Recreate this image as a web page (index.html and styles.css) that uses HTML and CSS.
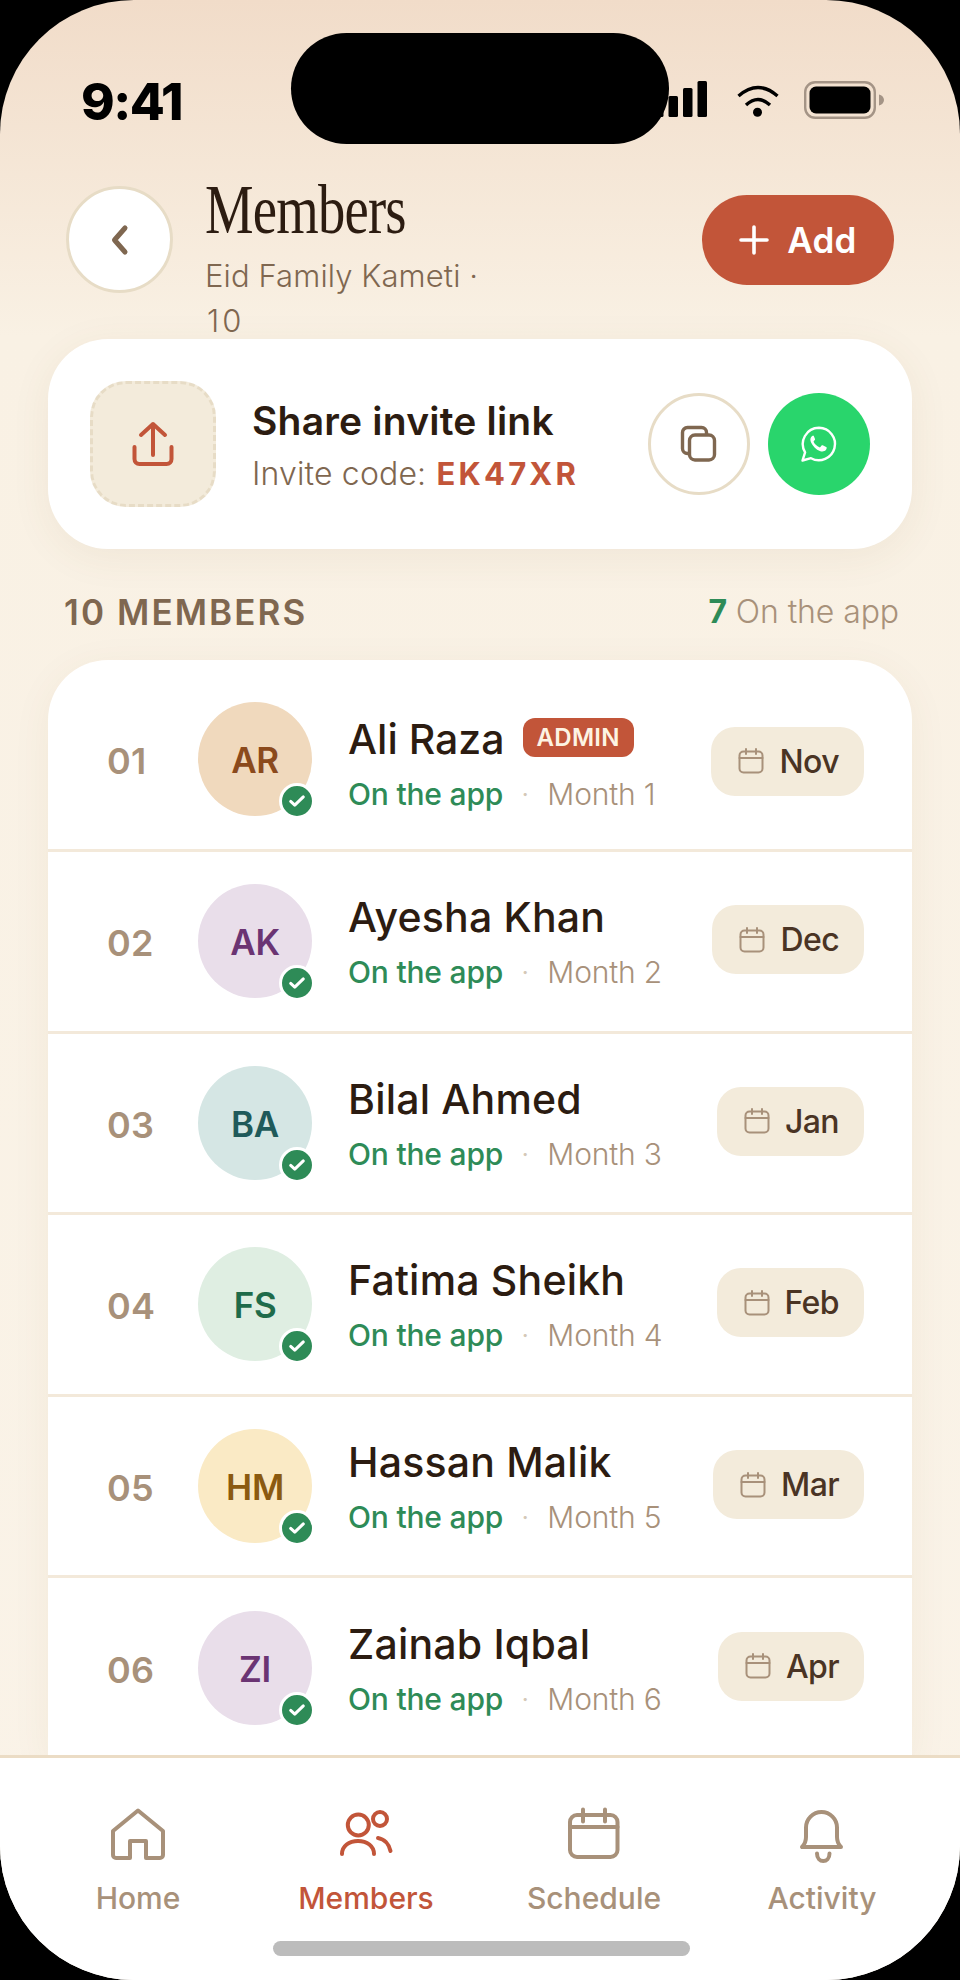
FILE: index.html
```html
<!DOCTYPE html>
<html lang="en">
<head>
<meta charset="utf-8">
<title>Members</title>
<link rel="stylesheet" href="styles.css">
</head>
<body>
<div class="phone">
  <div class="island"></div>
  <header class="status">
    <span class="time">9:41</span>
    <div class="status-icons">
      <svg class="signal" width="53" height="36" viewBox="0 0 53 36"><rect x="0" y="23" width="9.500" height="13" rx="1.500"/><rect x="14.500" y="15" width="9.500" height="21" rx="1.500"/><rect x="29" y="7" width="9.500" height="29" rx="1.500"/><rect x="43.500" y="0" width="9.500" height="36" rx="1.500"/></svg>
      <svg class="wifi" width="42" height="32" viewBox="0 0 42 32" fill="none" stroke="#000" stroke-width="3.400"><path d="M1.500 11Q21-6 40.500 11"/><path d="M9 20Q21 9 33 20"/><circle cx="20.500" cy="27.300" r="4.500" fill="#000" stroke="none"/></svg>
      <svg class="battery" width="80" height="38" viewBox="0 0 80 38"><rect x="1.200" y="1.200" width="69.600" height="35.600" rx="10" fill="none" stroke="#a49486" stroke-width="2.400"/><rect x="5.500" y="5.500" width="61" height="27" rx="6.500" fill="#000"/><path d="M75 13.500c3 .5 5 3 5 5.500s-2 5-5 5.500z" fill="#a49486"/></svg>
    </div>
  </header>

  <section class="topbar">
    <button class="back" aria-label="Back"><svg width="26" height="34" viewBox="0 0 26 34" fill="none" stroke="#7f6750" stroke-width="5" stroke-linecap="round" stroke-linejoin="round"><path d="M18 5 7.500 17 18 29"/></svg></button>
    <div class="heading">
      <h1>Members</h1>
      <p>Eid Family Kameti ·<br><span class="total">10</span></p>
    </div>
    <button class="add"><svg width="30" height="30" viewBox="0 0 30 30" stroke="#fff" stroke-width="3.600" stroke-linecap="round"><path d="M15 2v26M2 15h26"/></svg><span>Add</span></button>
  </section>

  <section class="invite">
    <div class="invite-icon"><svg width="44" height="48" viewBox="0 0 44 48" fill="none" stroke="#c25539" stroke-width="4" stroke-linecap="round" stroke-linejoin="round"><path d="M22 35V4M10 15 22 4l12 11M3.500 27v12c0 3 2 5 5 5h27c3 0 5-2 5-5V27"/></svg></div>
    <div class="invite-text">
      <div class="invite-title">Share invite link</div>
      <div class="invite-code">Invite code: <b>EK47XR</b></div>
    </div>
    <button class="round copy" aria-label="Copy"><svg width="36" height="36" viewBox="0 0 36 36" fill="none" stroke="#7f6750" stroke-width="3.400"><rect x="8.500" y="9" width="25" height="25" rx="5.500"/><path d="M8 27.500H6.500a5 5 0 0 1-5-5V6.500a5 5 0 0 1 5-5h14a5 5 0 0 1 5 5V9"/></svg></button>
    <button class="round wa" aria-label="WhatsApp"><svg width="36" height="36" viewBox="0 0 36 36"><path d="M18 1.800A16.200 16.200 0 0 0 4.100 26.300L1.500 34.500l8.500-2.300A16.200 16.200 0 1 0 18 1.800Z" fill="none" stroke="#fff" stroke-width="2.400" stroke-linejoin="round"/><path d="M12.600 9.500c-.6 0-1.600.4-2.200 1.200-1.300 1.600-1.300 3.700-.2 6 1.700 3.500 5 6.900 8.600 8.300 2.300.9 4.600.7 6-.9.600-.7.900-1.500.9-2.300 0-.5-.2-.7-.6-.9l-3.400-1.600c-.5-.2-.8-.1-1.100.3l-1.200 1.500c-.3.300-.6.400-1 .2-2.500-1-4.500-2.900-5.700-5.200-.2-.4-.1-.7.200-1l.9-1.100c.3-.4.300-.7.200-1.100l-1.300-3.200c-.2-.4-.4-.6-.8-.6z" fill="#fff"/></svg></button>
  </section>

  <div class="section-head">
    <span class="count">10 MEMBERS</span>
    <span class="onapp"><b>7</b> On the app</span>
  </div>

  <section class="list">
    <div class="row">
      <span class="num">01</span>
      <div class="avatar av-tan">AR<span class="check"><svg width="20" height="20" viewBox="0 0 20 20" fill="none" stroke="#fff" stroke-width="3.400" stroke-linecap="round" stroke-linejoin="round"><path d="m3 10.500 4.500 4L17 5.500"/></svg></span></div>
      <div class="info"><div class="name">Ali Raza<span class="badge">ADMIN</span></div><div class="sub"><span class="on">On the app</span><i>·</i><span>Month 1</span></div></div>
      <div class="pill"><svg width="26" height="26" viewBox="0 0 26 26" fill="none" stroke="#a8917a" stroke-width="2"><rect x="1.500" y="3.500" width="23" height="21" rx="4"/><path d="M1.500 10h23M8 1v5M18 1v5" stroke-linecap="round"/></svg>Nov</div>
    </div>
    <div class="row">
      <span class="num">02</span>
      <div class="avatar av-plum">AK<span class="check"><svg width="20" height="20" viewBox="0 0 20 20" fill="none" stroke="#fff" stroke-width="3.400" stroke-linecap="round" stroke-linejoin="round"><path d="m3 10.500 4.500 4L17 5.500"/></svg></span></div>
      <div class="info"><div class="name">Ayesha Khan</div><div class="sub"><span class="on">On the app</span><i>·</i><span>Month 2</span></div></div>
      <div class="pill"><svg width="26" height="26" viewBox="0 0 26 26" fill="none" stroke="#a8917a" stroke-width="2"><rect x="1.500" y="3.500" width="23" height="21" rx="4"/><path d="M1.500 10h23M8 1v5M18 1v5" stroke-linecap="round"/></svg>Dec</div>
    </div>
    <div class="row">
      <span class="num">03</span>
      <div class="avatar av-teal">BA<span class="check"><svg width="20" height="20" viewBox="0 0 20 20" fill="none" stroke="#fff" stroke-width="3.400" stroke-linecap="round" stroke-linejoin="round"><path d="m3 10.500 4.500 4L17 5.500"/></svg></span></div>
      <div class="info"><div class="name">Bilal Ahmed</div><div class="sub"><span class="on">On the app</span><i>·</i><span>Month 3</span></div></div>
      <div class="pill"><svg width="26" height="26" viewBox="0 0 26 26" fill="none" stroke="#a8917a" stroke-width="2"><rect x="1.500" y="3.500" width="23" height="21" rx="4"/><path d="M1.500 10h23M8 1v5M18 1v5" stroke-linecap="round"/></svg>Jan</div>
    </div>
    <div class="row">
      <span class="num">04</span>
      <div class="avatar av-mint">FS<span class="check"><svg width="20" height="20" viewBox="0 0 20 20" fill="none" stroke="#fff" stroke-width="3.400" stroke-linecap="round" stroke-linejoin="round"><path d="m3 10.500 4.500 4L17 5.500"/></svg></span></div>
      <div class="info"><div class="name">Fatima Sheikh</div><div class="sub"><span class="on">On the app</span><i>·</i><span>Month 4</span></div></div>
      <div class="pill"><svg width="26" height="26" viewBox="0 0 26 26" fill="none" stroke="#a8917a" stroke-width="2"><rect x="1.500" y="3.500" width="23" height="21" rx="4"/><path d="M1.500 10h23M8 1v5M18 1v5" stroke-linecap="round"/></svg>Feb</div>
    </div>
    <div class="row">
      <span class="num">05</span>
      <div class="avatar av-gold">HM<span class="check"><svg width="20" height="20" viewBox="0 0 20 20" fill="none" stroke="#fff" stroke-width="3.400" stroke-linecap="round" stroke-linejoin="round"><path d="m3 10.500 4.500 4L17 5.500"/></svg></span></div>
      <div class="info"><div class="name">Hassan Malik</div><div class="sub"><span class="on">On the app</span><i>·</i><span>Month 5</span></div></div>
      <div class="pill"><svg width="26" height="26" viewBox="0 0 26 26" fill="none" stroke="#a8917a" stroke-width="2"><rect x="1.500" y="3.500" width="23" height="21" rx="4"/><path d="M1.500 10h23M8 1v5M18 1v5" stroke-linecap="round"/></svg>Mar</div>
    </div>
    <div class="row">
      <span class="num">06</span>
      <div class="avatar av-plum">ZI<span class="check"><svg width="20" height="20" viewBox="0 0 20 20" fill="none" stroke="#fff" stroke-width="3.400" stroke-linecap="round" stroke-linejoin="round"><path d="m3 10.500 4.500 4L17 5.500"/></svg></span></div>
      <div class="info"><div class="name">Zainab Iqbal</div><div class="sub"><span class="on">On the app</span><i>·</i><span>Month 6</span></div></div>
      <div class="pill"><svg width="26" height="26" viewBox="0 0 26 26" fill="none" stroke="#a8917a" stroke-width="2"><rect x="1.500" y="3.500" width="23" height="21" rx="4"/><path d="M1.500 10h23M8 1v5M18 1v5" stroke-linecap="round"/></svg>Apr</div>
    </div>
  </section>

  <nav class="tabbar">
    <div class="tab"><svg width="58" height="54" viewBox="0 0 58 54" fill="none" stroke="#a8917a" stroke-width="4" stroke-linejoin="round"><path d="M29 4.500 4 25v24a3 3 0 0 0 3 3h14V35h16v17h14a3 3 0 0 0 3-3V25z"/></svg><span>Home</span></div>
    <div class="tab active"><svg width="58" height="54" viewBox="0 0 58 54" fill="none" stroke="#c25539" stroke-width="4" stroke-linecap="round"><circle cx="21.300" cy="19" r="10.500"/><circle cx="43" cy="13" r="7"/><path d="M5 48c0-8 7-13 16-13s16 5 16 13M41 32c6 1 11 6 12.500 13"/></svg><span>Members</span></div>
    <div class="tab"><svg width="58" height="54" viewBox="0 0 58 54" fill="none" stroke="#a8917a" stroke-width="4" stroke-linecap="round"><rect x="5" y="9" width="47.500" height="42" rx="7"/><path d="M5 21h47.500M18 3.500v12M40 3.500v12"/></svg><span>Schedule</span></div>
    <div class="tab"><svg width="58" height="54" viewBox="0 0 58 54" fill="none" stroke="#a8917a" stroke-width="4" stroke-linecap="round" stroke-linejoin="round"><path d="M9 41h39c-3-3-4-6-4-10v-9.500a15.500 15.500 0 0 0-31 0V31c0 4-1 7-4 10zM24 47.500c0 10 12.500 10 12.500 0"/></svg><span>Activity</span></div>
  </nav>
  <div class="home-indicator"></div>
</div>
</body>
</html>
```

FILE: styles.css
```css
* { box-sizing: border-box; }
html, body { margin: 0; padding: 0; background: #000; }
body { width: 960px; height: 1980px; overflow: hidden; font-family: Inter, "Noto Sans", sans-serif; }
button { padding: 0; font: inherit; cursor: pointer; }
b { font-weight: inherit; }
svg { overflow: visible; flex: none; }

.phone {
  position: relative;
  width: 960px;
  height: 1980px;
  border-radius: 134px;
  overflow: hidden;
  display: flex;
  flex-direction: column;
  background: linear-gradient(180deg, #f1dcc9 0, #f9f1e4 336px, #faf3e8 100%);
}
.island {
  position: absolute;
  left: 291px;
  top: 33px;
  width: 378px;
  height: 111px;
  border-radius: 56px;
  background: #000;
  z-index: 5;
}

.status { height: 186px; flex: none; display: flex; justify-content: space-between; padding: 78px 76px 0 81px; }
.time { font-size: 51px; font-weight: 800; line-height: 48px; color: #000; letter-spacing: -1.500px; }
.status-icons { display: flex; align-items: flex-start; }
.signal { margin: 3px 0 0; }
.wifi { margin: 7px 0 0 30px; }
.battery { margin: 3px 0 0 25px; }

.topbar { display: flex; height: 153px; flex: none; padding: 0 66px; position: relative; }
.back {
  width: 107px; height: 107px; border-radius: 50%;
  background: #fff; border: 3px solid #e7dcc6;
  display: flex; align-items: center; justify-content: center; flex: none;
}
.heading { margin-left: 32px; width: 300px; }
.heading h1 {
  margin: -13px 0 0; font-family: "Liberation Serif", serif; font-weight: 400;
  font-size: 70px; line-height: 74px; color: #2c1c11; letter-spacing: -1px;
  transform: scaleX(.78); transform-origin: left center; white-space: nowrap;
}
.heading p { margin: 6px 0 0; font-size: 31px; line-height: 45px; color: #7f6750; font-weight: 300; letter-spacing: .1px; }
.total { letter-spacing: 3px; margin-left: 2px; }
.add {
  position: absolute; right: 66px; top: 9px; width: 192px; height: 90px; border: 0; border-radius: 45px;
  background: #c25539; color: #fff; font-size: 35px; font-weight: 600; letter-spacing: .3px;
  display: flex; align-items: center; justify-content: center; gap: 18px;
}

.invite {
  margin: 0 48px; height: 210px; flex: none; border-radius: 60px; background: #fff;
  padding: 0 42px; display: flex; align-items: center;
  box-shadow: 0 8px 40px rgba(120, 80, 40, .07);
}
.invite-icon {
  width: 126px; height: 126px; flex: none; border-radius: 36px; background: #f3ebdb;
  border: 3px dashed #e7dcc6; display: flex; align-items: center; justify-content: center;
}
.invite-text { margin-left: 36px; flex: 1; padding-top: 5px; white-space: nowrap; }
.invite-title { font-size: 39px; font-weight: 600; line-height: 46px; color: #2c1c11; letter-spacing: .2px; }
.invite-code { font-size: 32px; line-height: 42px; color: #7f6750; margin-top: 9px; font-weight: 300; letter-spacing: .15px; }
.invite-code b { color: #c25539; font-weight: 700; font-size: 31px; letter-spacing: 3.200px; margin-left: 1px; }
.round { width: 102px; height: 102px; border-radius: 50%; flex: none; display: flex; align-items: center; justify-content: center; }
.copy { background: #fff; border: 3px solid #e7dcc6; }
.wa { background: #29d56c; border: 0; margin-left: 18px; }

.section-head { height: 111px; flex: none; padding: 14px 61px 0 64px; display: flex; justify-content: space-between; align-items: center; }
.count { font-size: 35px; font-weight: 600; color: #7f6750; letter-spacing: 2.100px; }
.onapp { font-size: 32px; color: #a8917a; font-weight: 300; letter-spacing: -.1px; }
.onapp b { color: #2e8b57; font-weight: 700; }

.list {
  margin: 0 48px; flex: none; background: #fff; border-radius: 60px 60px 0 0;
  box-shadow: 0 8px 40px rgba(120, 80, 40, .06);
}
.row { height: 181.600px; display: flex; align-items: center; padding: 0 48px 0 59px; border-bottom: 3px solid #f3e9da; }
.row:first-child { height: 192px; padding-top: 8px; }
.row:first-child .info { margin-top: 8px; }
.row:first-child .pill { margin-top: 5px; }
.num { width: 91px; font-size: 36px; font-weight: 600; color: #a8917a; flex: none; padding-top: 4px; letter-spacing: .2px; }
.avatar {
  position: relative; width: 114px; height: 114px; border-radius: 50%; flex: none;
  display: flex; align-items: center; justify-content: center; font-size: 35px; font-weight: 600;
  padding-top: 2px; letter-spacing: -.3px;
}
.av-tan { background: #f0d9bd; color: #8b4a1c; }
.av-plum { background: #e9deea; color: #6b3473; }
.av-teal { background: #d5e6e4; color: #1f5a5a; }
.av-mint { background: #dfeee2; color: #1f6b4a; }
.av-gold { background: #faeac5; color: #8b5a10; }
.check {
  position: absolute; right: -3px; bottom: -3px; width: 36px; height: 36px; border-radius: 50%;
  background: #2e8b57; border: 3px solid #fff;
  display: flex; align-items: center; justify-content: center;
}
.check svg { width: 18px; height: 18px; }
.info { margin-left: 36px; flex: 1; min-width: 0; }
.name { font-size: 41px; font-weight: 500; line-height: 50px; color: #2c1c11; display: flex; align-items: center; gap: 20px; letter-spacing: .2px; white-space: pre; margin-top: 2px; }
.row:first-child .name { letter-spacing: 0; }
.badge { background: #c25539; color: #fdf3e3; font-size: 24px; font-weight: 600; height: 39px; line-height: 39px; padding: 0 14px; border-radius: 12px; letter-spacing: .3px; margin-top: -3px; margin-left: -2px; }
.sub { display: flex; align-items: center; font-size: 30px; line-height: 40px; color: #a8917a; letter-spacing: -.2px; margin-top: 10px; white-space: nowrap; font-weight: 300; }
.sub .on { color: #2e8b57; font-weight: 500; }
.sub i { font-style: normal; margin: 0 18px; color: #d4c8b8; }
.pill {
  display: flex; align-items: center; gap: 15px; height: 69px; padding: 0 25px 0 27px; border-radius: 24px; flex: none; margin-top: -3px;
  background: #f3ebdb; font-size: 32px; font-weight: 500; color: #4a3424; letter-spacing: -.6px;
}

.tabbar {
  position: absolute; left: 0; right: 0; bottom: 0; height: 225px; background: #fff;
  border-top: 3px solid #ebdcc5; display: grid; grid-template-columns: repeat(4, 228px); padding: 48px 24px 0; z-index: 3;
}
.tab { display: flex; flex-direction: column; align-items: center; font-size: 30px; font-weight: 500; color: #a8917a; gap: 20px; line-height: 36px; }
.tab.active { color: #c25539; }
.home-indicator { position: absolute; left: 273px; bottom: 24px; width: 417px; height: 15px; border-radius: 8px; background: #bcbcbc; z-index: 4; }
```
